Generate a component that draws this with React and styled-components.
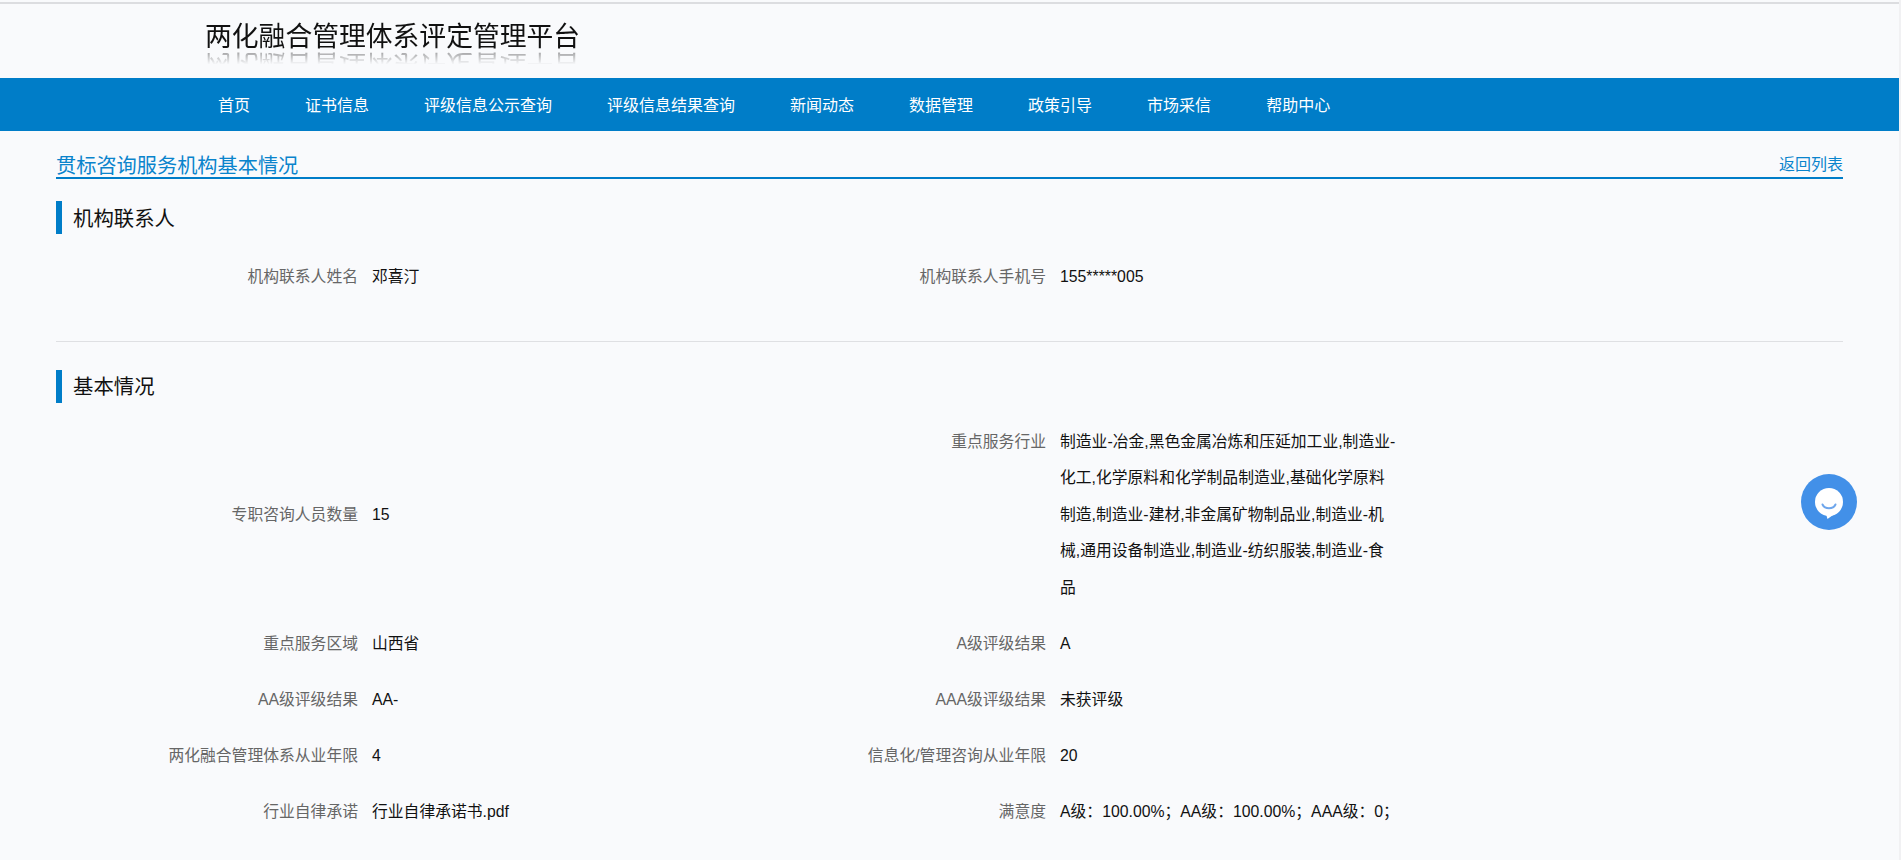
import React from 'react';
import styled, { createGlobalStyle } from 'styled-components';

const GlobalStyle = createGlobalStyle`
  html, body {
    margin: 0;
    padding: 0;
    background: #f1f1f3;
    overflow: hidden;
  }
  body {
    font-family: "Liberation Sans", "Noto Sans CJK SC", sans-serif;
  }
`;

const Page = styled.div`
  width: 1899px;
  height: 860px;
  padding-top: 2px;
  overflow: hidden;
  background: #f9fafc;
  box-sizing: border-box;
`;

const Header = styled.header`
  height: 74px;
  padding-left: 205px;
  border-top: 2px solid #dcdde0;
`;

const Logo = styled.h1`
  margin: 0;
  padding-top: 15px;
  font-size: 26.8px;
  line-height: 36px;
  font-weight: 400;
  color: #111;
  white-space: nowrap;
  -webkit-box-reflect: below -9px linear-gradient(transparent 64%, rgba(0, 0, 0, 0.55));
`;

const Nav = styled.nav`
  height: 53px;
  box-sizing: border-box;
  padding: 0 0 2px 218px;
  background: #007dc8;
  display: flex;
  align-items: center;
  gap: 55px;
`;

const NavItem = styled.a`
  color: #fff;
  font-size: 16px;
  white-space: nowrap;
`;

const Main = styled.main`
  padding: 18px 56px 0 56px;
`;

const TitleBar = styled.div`
  display: flex;
  justify-content: space-between;
  align-items: flex-end;
  border-bottom: 2px solid #007dc8;
  height: 28px;
`;

const PageTitle = styled.h2`
  margin: 0;
  font-size: 20.2px;
  line-height: 21px;
  font-weight: 400;
  color: #0a84cc;
`;

const BackLink = styled.a`
  font-size: 16px;
  line-height: 24px;
  color: #0a84cc;
`;

const SectionHead = styled.h3`
  margin: ${(p) => p.$top}px 0 0;
  border-left: 6px solid #007dc8;
  padding-left: 11px;
  height: 33px;
  line-height: ${(p) => p.$line}px;
  font-size: 20.4px;
  font-weight: 400;
  color: #111;
`;

const Grid = styled.div`
  display: grid;
  grid-template-columns: 688px 688px;
  margin-top: ${(p) => p.$top}px;
`;

const Field = styled.div`
  display: flex;
  align-items: ${(p) => (p.$tall ? 'flex-start' : 'center')};
  align-self: center;
  min-height: 56px;
  padding-bottom: ${(p) => (p.$tall ? 10 : p.$lift || 0)}px;
`;

const Label = styled.span`
  width: 302px;
  flex: none;
  text-align: right;
  font-size: 15.8px;
  line-height: 36.4px;
  color: #666;
  white-space: nowrap;
`;

const Value = styled.span`
  width: 370px;
  margin-left: 14px;
  font-size: 15.8px;
  line-height: 36.4px;
  color: #111;
  white-space: pre-line;
`;

const Divider = styled.hr`
  margin: 36px 0 0;
  border: 0;
  border-top: 1px solid #dfe0e3;
`;

const ChatButton = styled.button`
  position: fixed;
  left: 1801px;
  top: 474px;
  width: 56px;
  height: 56px;
  padding: 3px 0 0;
  border: 0;
  border-radius: 50%;
  background: #4290e8;
  display: flex;
  align-items: center;
  justify-content: center;
`;

const navItems = ['首页', '证书信息', '评级信息公示查询', '评级信息结果查询', '新闻动态', '数据管理', '政策引导', '市场采信', '帮助中心'];

const industries = `制造业-冶金,黑色金属冶炼和压延加工业,制造业-
化工,化学原料和化学制品制造业,基础化学原料
制造,制造业-建材,非金属矿物制品业,制造业-机
械,通用设备制造业,制造业-纺织服装,制造业-食
品`;

const basicFields = [
  { label: '专职咨询人员数量', value: '15', lift: 9 },
  { label: '重点服务行业', value: industries, tall: true },
  { label: '重点服务区域', value: '山西省' },
  { label: 'A级评级结果', value: 'A' },
  { label: 'AA级评级结果', value: 'AA-' },
  { label: 'AAA级评级结果', value: '未获评级' },
  { label: '两化融合管理体系从业年限', value: '4' },
  { label: '信息化/管理咨询从业年限', value: '20' },
  { label: '行业自律承诺', value: '行业自律承诺书.pdf' },
  { label: '满意度', value: 'A级：100.00%；AA级：100.00%；AAA级：0；' },
];

function ChatIcon() {
  return (
    <svg width="28" height="31" viewBox="0 0 28 31">
      <circle cx="14" cy="14" r="14" fill="#fff" />
      <path d="M11 26l1.500 5 7-5z" fill="#fff" />
      <path d="M7.500 16.500c2.500 5 10.500 5 13 0" fill="none" stroke="#6ea6ec" strokeWidth="2" strokeLinecap="round" />
    </svg>
  );
}

export default function App() {
  return (
    <Page>
      <GlobalStyle />
      <Header>
        <Logo>两化融合管理体系评定管理平台</Logo>
      </Header>
      <Nav>
        {navItems.map((item) => (
          <NavItem key={item}>{item}</NavItem>
        ))}
      </Nav>
      <Main>
        <TitleBar>
          <PageTitle>贯标咨询服务机构基本情况</PageTitle>
          <BackLink>返回列表</BackLink>
        </TitleBar>
        <SectionHead $top={22} $line={37}>机构联系人</SectionHead>
        <Grid $top={15}>
          <Field>
            <Label>机构联系人姓名</Label>
            <Value>邓喜汀</Value>
          </Field>
          <Field>
            <Label>机构联系人手机号</Label>
            <Value>155*****005</Value>
          </Field>
        </Grid>
        <Divider />
        <SectionHead $top={28} $line={34}>基本情况</SectionHead>
        <Grid $top={21}>
          {basicFields.map((f) => (
            <Field key={f.label} $tall={f.tall} $lift={f.lift}>
              <Label>{f.label}</Label>
              <Value>{f.value}</Value>
            </Field>
          ))}
        </Grid>
      </Main>
      <ChatButton aria-label="chat">
        <ChatIcon />
      </ChatButton>
    </Page>
  );
}
